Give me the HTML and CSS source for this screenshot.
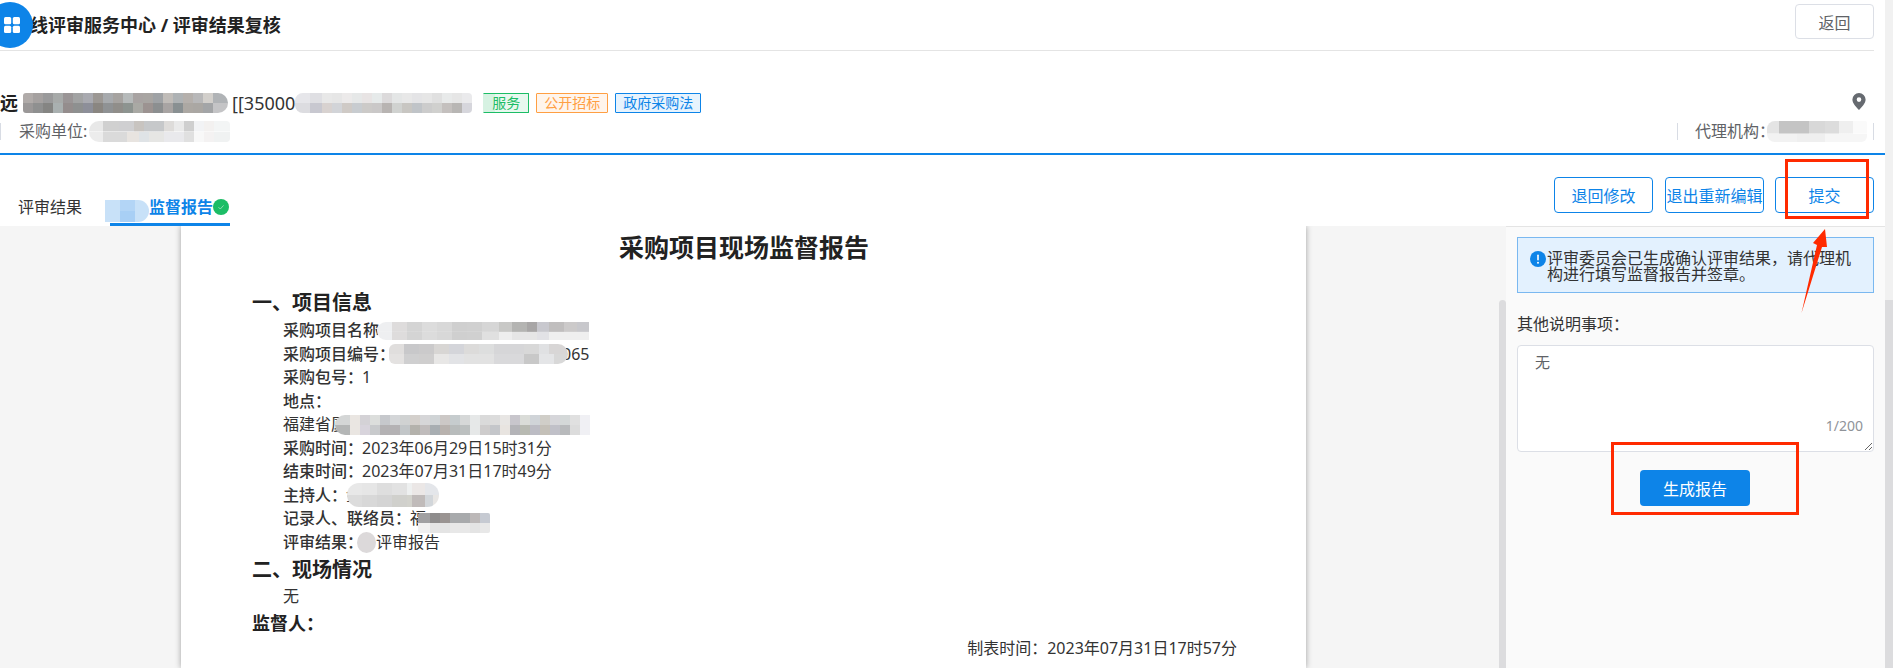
FILE: index.html
```html
<!DOCTYPE html>
<html lang="zh-CN">
<head>
<meta charset="utf-8">
<title>评审结果复核</title>
<link rel="stylesheet" href="styles.css">
</head>
<body>
<div class="page">
  <div class="main">
    <header class="head">
      <h1 class="head-title">在线评审服务中心 / 评审结果复核</h1>
      <button class="btn-back">返回</button>
    </header>
    <section class="proj">
      <div class="proj-row">
        <strong class="proj-name">远</strong>
        <span class="mosaic m-name"></span>
        <span class="proj-code">[[35000</span>
        <span class="mosaic m-code"></span>
        <span class="tag tag-green">服务</span>
        <span class="tag tag-orange">公开招标</span>
        <span class="tag tag-blue">政府采购法</span>
        <svg class="pin" viewBox="0 0 14 17" width="14" height="17"><path fill-rule="evenodd" fill="#666a70" d="M7 0a6.6 6.6 0 0 1 6.6 6.6C13.600 10.500 9.500 14.500 7 17 4.500 14.500.4 10.500.4 6.600A6.600 6.600 0 0 1 7 0zm0 4.300a2.300 2.300 0 1 0 0 4.600 2.300 2.300 0 0 0 0-4.600z"/></svg>
      </div>
      <div class="meta-row">
        <div class="meta-cell meta-buyer">采购单位:<span class="mosaic m-buyer"></span></div>
        <div class="meta-cell meta-agent">代理机构：<span class="mosaic m-agent"></span></div>
      </div>
    </section>
    <nav class="tabbar">
      <div class="tabs">
        <span class="tab">评审结果</span>
        <span class="tab tab-active"><span class="mosaic m-tab"></span><span>监督报告</span><svg class="tab-dot" viewBox="0 0 16 16" width="16" height="16"><circle cx="8" cy="8" r="8" fill="#1cbd66"/><path d="M5.500 8.200l1.800 1.800 3.300-3.600" fill="none" stroke="#8fdcb3" stroke-width="1"/></svg></span>
      </div>
      <div class="actions">
        <button class="btn-line">退回修改</button>
        <button class="btn-line">退出重新编辑</button>
        <button class="btn-line">提交</button>
      </div>
    </nav>
    <div class="work">
      <div class="doc-area">
        <article class="paper">
          <h2 class="paper-title">采购项目现场监督报告</h2>
          <h3 class="sec sec-first">一、项目信息</h3>
          <div class="line"><b>采购项目名称</b><span class="mosaic m-p1"></span></div>
          <div class="line"><b>采购项目编号：</b><span class="mosaic m-p2"></span><span>065</span></div>
          <div class="line"><b>采购包号：</b>1</div>
          <div class="line"><b>地点：</b></div>
          <div class="line">福建省厦<span class="mosaic m-p3"></span></div>
          <div class="line"><b>采购时间：</b>2023年06月29日15时31分</div>
          <div class="line"><b>结束时间：</b>2023年07月31日17时49分</div>
          <div class="line"><b>主持人：</b>金<span class="mosaic m-p4"></span></div>
          <div class="line"><b>记录人、联络员：</b>福<span class="mosaic m-p5"></span></div>
          <div class="line"><b>评审结果：</b><span class="mosaic m-p6"></span>评审报告</div>
          <h3 class="sec sec-second">二、现场情况</h3>
          <div class="line line-none">无</div>
          <h4 class="signer">监督人：</h4>
          <p class="made">制表时间：2023年07月31日17时57分</p>
        </article>
      </div>
      <div class="inner-scroll"><div class="inner-thumb"></div></div>
      <aside class="side">
        <div class="alert">
          <svg class="alert-ico" viewBox="0 0 16 16" width="16" height="16"><circle cx="8" cy="8" r="8" fill="#0d84e8"/><rect x="7.200" y="3.500" width="1.600" height="6" rx=".8" fill="#fff"/><circle cx="8" cy="11.800" r="1" fill="#fff"/></svg>
          <p class="alert-text">评审委员会已生成确认评审结果，请代理机构进行填写监督报告并签章。</p>
        </div>
        <label class="side-label" for="note">其他说明事项：</label>
        <div class="note-box">
          <textarea id="note" class="note">无</textarea>
          <span class="note-count">1/200</span>
        </div>
        <div class="gen-row"><button class="btn-gen">生成报告</button></div>
      </aside>
    </div>
  </div>
  <div class="rail"><div class="rail-thumb"></div></div>
  <div class="logo"><svg viewBox="0 0 16 16" width="16" height="16"><rect x="0" y="0" width="7.200" height="7.200" rx="1.500" fill="#fff"/><rect x="8.800" y="0" width="7.200" height="7.200" rx="1.500" fill="#fff"/><rect x="0" y="8.800" width="7.200" height="7.200" rx="1.500" fill="#fff"/><rect x="8.800" y="8.800" width="7.200" height="7.200" rx="1.500" fill="#fff"/></svg></div>
  <div class="mark mark-submit"></div>
  <div class="mark mark-gen"></div>
  <svg class="arrow" viewBox="0 0 40 90" width="40" height="90"><polygon fill="#ff2a00" points="25,1 27,19 22,19 1.500,85 17,17 13,15"/></svg>
</div>
</body>
</html>
```
FILE: styles.css
```css
* { box-sizing: border-box; }
html, body { margin: 0; padding: 0; }
body {
  width: 1893px;
  height: 668px;
  overflow: hidden;
  background: #fff;
  color: #333;
  font-family: "Noto Sans", "Noto Sans CJK SC", sans-serif;
  font-size: 16px;
}
button { font-family: inherit; font-size: 16px; cursor: pointer; padding: 0; }
h1, h2, h3, h4, p { margin: 0; }

.page { position: relative; display: flex; width: 1893px; height: 668px; overflow: hidden; }
.main { width: 1885px; height: 668px; display: flex; flex-direction: column; }
.rail { width: 8px; height: 668px; background: #f1f1f1; padding-top: 300px; }
.rail-thumb { height: 368px; background: #dcdcde; }

/* header */
.head {
  height: 51px;
  margin-right: 11px;
  padding-left: 12px;
  border-bottom: 1px solid #e4e4e4;
  display: flex;
  justify-content: space-between;
  align-items: flex-start;
}
.head-title { font-size: 18px; font-weight: 700; line-height: 50px; color: #222; }
.btn-back {
  margin-top: 4px;
  width: 79px;
  height: 35px;
  border: 1px solid #dcdfe6;
  border-radius: 4px;
  background: #fff;
  color: #606266;
}
.logo {
  position: absolute;
  left: -13px;
  top: 2px;
  width: 46px;
  height: 46px;
  border-radius: 50%;
  background: #0d84e8;
  display: flex;
  align-items: center;
  justify-content: center;
}
.logo svg { margin-left: 4px; margin-top: -1px; }

/* project info */
.proj { height: 104px; border-bottom: 2px solid #0d84e8; padding-top: 42px; }
.proj-row { display: flex; align-items: center; height: 20px; padding-right: 19px; }
.proj-name { font-size: 18px; line-height: 20px; font-weight: 700; color: #222; width: 23px; flex: none; }
.proj-code { font-size: 18px; line-height: 20px; margin-left: 4px; color: #333; }
.tag {
  height: 20px;
  line-height: 18px;
  padding: 0 7px;
  margin-left: 7px;
  border: 1px solid;
  font-size: 14px;
  border-radius: 1px;
}
.tag-green {
  margin-left: 11px;
  padding: 0 8px;
  color: #1cbd66;
  border-color: #1cbd66;
  background: linear-gradient(90deg, #d6f2e2 0 11px, #e8f8ef 11px);
  border-left-color: #d6f2e2;
}
.tag-orange { color: #ff9f43; border-color: #ff9f43; background: #fff5ec; }
.tag-blue { color: #0d84e8; border-color: #0d84e8; background: #e7f3fd; }
.pin { margin-left: auto; margin-top: -3px; }

.meta-row { display: flex; justify-content: space-between; margin-top: 10px; margin-right: 11px; color: #606266; font-size: 16px; }
.meta-cell { height: 17px; line-height: 17px; display: flex; align-items: center; border-left: 1px solid #d8dce4; }
.meta-buyer { padding-left: 18px; }
.meta-agent { width: 197px; padding-left: 17px; border-right: 1px solid #d8dce4; }

/* mosaics */
.mosaic { display: block; flex: none; }
.m-name {
  width: 205px; height: 20px; border-radius: 3px 10px 10px 3px;
  background:
    linear-gradient(90deg,#b0aba9 0 10px,#a5a1a0 0 20px,#9a9a9b 0 30px,#a7aaa9 0 40px,#9a9596 0 50px,#a2a3a3 0 60px,#a9aab0 0 70px,#9c9894 0 80px,#a7aaad 0 90px,#a6a3a0 0 100px,#b6baba 0 110px,#a8a3a2 0 120px,#a8a5a2 0 130px,#9fa2a5 0 140px,#c0bcb8 0 150px,#aeb2b4 0 160px,#b5b0ac 0 170px,#b8b8b9 0 180px,#d2cfcb 0 190px,#b0b3b6 0 205px) top/100% 50% no-repeat,
    linear-gradient(90deg,#9b9898 0 10px,#8f9090 0 20px,#858583 0 30px,#a9b0b0 0 40px,#948d8d 0 50px,#8e9090 0 60px,#8d8f99 0 70px,#8a8681 0 80px,#8f9294 0 90px,#908e8a 0 100px,#8d9490 0 110px,#a9a9a4 0 120px,#9c9391 0 130px,#8c8f90 0 140px,#a8a4a3 0 150px,#899092 0 160px,#aca8a3 0 170px,#aaa7a3 0 180px,#a3a5a7 0 190px,#c4c4c6 0 205px) bottom/100% 50% no-repeat;
}
.m-code {
  width: 177px; height: 20px; border-radius: 8px 4px 4px 8px;
  background:
    linear-gradient(90deg,#e6e6ea 0 15px,#dfdfe3 0 27px,#e8e8e8 0 37px,#e6e6e6 0 47px,#eceaea 0 57px,#e6e8e8 0 67px,#e8e4e4 0 77px,#e6eaea 0 87px,#dcdadb 0 97px,#e4e6e6 0 107px,#e8e8e8 0 117px,#e4e4e6 0 127px,#e6e6e6 0 137px,#e0e0e0 0 147px,#e8eaea 0 157px,#e6e6e6 0 167px,#eaeaec 0 177px) top/100% 50% no-repeat,
    linear-gradient(90deg,#dcdce0 0 15px,#c8c8d0 0 27px,#d8d2d0 0 37px,#d2d4d8 0 47px,#cfcac6 0 57px,#c8ccd0 0 67px,#cccac8 0 77px,#cac8c8 0 87px,#b8b4b2 0 97px,#d0d2d0 0 107px,#c8c6c2 0 117px,#c0c4c8 0 127px,#cccccc 0 137px,#d0d0ce 0 147px,#c4c0be 0 157px,#b8b6b4 0 167px,#d6d6dc 0 177px) bottom/100% 50% no-repeat;
}
.m-buyer {
  width: 141px; height: 21px; margin-left: 2px; border-radius: 10px 4px 4px 10px;
  background:
    linear-gradient(90deg,#e8e8e8 0 14px,#d0d0d0 0 30px,#cfcfd1 0 45px,#c8c4c0 0 55px,#c6c8ca 0 75px,#dedcda 0 85px,#eaeaea 0 95px,#cfcfcf 0 105px,#f2f3f5 0 115px,#f3f1f0 0 125px,#f3f5f5 0 141px) top/100% 50% no-repeat,
    linear-gradient(90deg,#ececec 0 14px,#dadada 0 38px,#e8e4e0 0 50px,#dfe3e6 0 60px,#e6e6e4 0 75px,#e9e9ec 0 95px,#e0e0e0 0 105px,#f8f8f8 0 115px,#f4f2f2 0 125px,#f0f2f2 0 141px) bottom/100% 50% no-repeat;
}
.m-agent {
  width: 100px; height: 21px; margin-left: -8px; border-radius: 8px 2px 6px 8px;
  background:
    linear-gradient(90deg,#e4e4e4 0 12px,#c4c4c4 0 42px,#d8d8d8 0 58px,#dcdcdc 0 72px,#efefef 0 86px,#fafafa 0 100px) top/100% 60% no-repeat,
    linear-gradient(90deg,#f2f2f2 0 30px,#efefef 0 58px,#f6f6f6 0 100px) bottom/100% 40% no-repeat;
}
.m-tab {
  width: 44px; height: 22px; margin-left: -5px; margin-top: 9px; border-radius: 0 11px 11px 0;
  background:
    linear-gradient(90deg,#c8e1f8 0 15px,#b3d5f6 0 30px,#c8e1f8 0 44px) top/100% 50% no-repeat,
    linear-gradient(90deg,#c8e1f8 0 15px,#a8cff5 0 30px,#c8e1f8 0 44px) bottom/100% 50% no-repeat;
}
.m-p1 {
  width: 212px; height: 18px; margin-left: -1px; border-radius: 9px 0 0 9px;
  background:
    linear-gradient(90deg,#eeeff1 0 15px,#dedcdc 0 30px,#d4d4d4 0 45px,#dcdcdc 0 60px,#d8d8d8 0 75px,#cfcfcf 0 90px,#d0d0d0 0 105px,#d6d6d6 0 122px,#c8c8c6 0 135px,#b4b4b2 0 150px,#a8a6a6 0 160px,#c8c8ce 0 172px,#c0bebe 0 187px,#cccaca 0 200px,#c8c8cc 0 212px) top/100% 55% no-repeat,
    linear-gradient(90deg,#eeeff1 0 15px,#dedcdc 0 30px,#d4d4d4 0 45px,#dcdcdc 0 60px,#d8d8d8 0 75px,#cfcfcf 0 90px,#d0d0d0 0 105px,#e0e0e0 0 122px,#eeeeee 0 135px,#e6e6e6 0 160px,#e2e2e6 0 172px,#efefef 0 212px) bottom/100% 45% no-repeat;
}
.m-p2 {
  width: 179px; height: 20px; margin-left: -5px; margin-right: -6px; position: relative; z-index: 1; border-radius: 6px 10px 10px 6px;
  background:
    linear-gradient(90deg,#e0dedd 0 15px,#c8c8ca 0 30px,#cbcacb 0 45px,#d8d6d4 0 60px,#d4d5da 0 75px,#dcdbda 0 90px,#dddede 0 105px,#d6d6d8 0 135px,#d8d8d8 0 150px,#e0e1e3 0 160px,#d8d6d6 0 179px) top/100% 50% no-repeat,
    linear-gradient(90deg,#e4e2e1 0 15px,#cfcfd0 0 30px,#cfcece 0 45px,#e8e7e6 0 60px,#e2e3e6 0 75px,#e2e2e2 0 105px,#d9d9db 0 135px,#c8c8c8 0 150px,#e4e5e7 0 165px,#d8d8d8 0 179px) bottom/100% 50% no-repeat;
}
.m-p3 {
  width: 255px; height: 20px; margin-left: -12px; border-radius: 10px 0 0 10px;
  background:
    linear-gradient(90deg,#d4d6d6 0 15px,#eae6e2 0 25px,#d4d2d6 0 35px,#dcdedc 0 45px,#c6c8cc 0 55px,#d4d6d8 0 65px,#d0d2d2 0 75px,#d4d0cc 0 85px,#d6d6d8 0 95px,#d0d4d6 0 105px,#ccc8c6 0 115px,#c6ccce 0 125px,#d6d8d8 0 135px,#e6e8e8 0 145px,#dadada 0 155px,#dcdcdc 0 165px,#e8e6e4 0 175px,#c8c6cc 0 185px,#dadcd8 0 195px,#d0d4d8 0 205px,#d0cec8 0 215px,#d6d6da 0 225px,#d4d8d8 0 235px,#e0e0e0 0 245px,#f0f0f4 0 255px) top/100% 50% no-repeat,
    linear-gradient(90deg,#b4b6b6 0 15px,#eae6e2 0 25px,#d8d4dc 0 35px,#c8cacc 0 45px,#b4b2b4 0 65px,#c2c6c8 0 75px,#b4b2ac 0 85px,#c0bcbc 0 95px,#a8aeb2 0 105px,#b8b2ae 0 115px,#b8bcbc 0 125px,#bcc0c0 0 135px,#e6e8e8 0 145px,#cecccc 0 155px,#c4c6ca 0 165px,#e8e4e0 0 175px,#b4b4b8 0 185px,#b8bab2 0 195px,#bcbcc4 0 205px,#c4c0b8 0 215px,#c0c0c8 0 225px,#b8babc 0 235px,#dcdcdc 0 245px,#f0f0f4 0 255px) bottom/100% 50% no-repeat;
}
.m-p4 {
  width: 92px; height: 24px; margin-left: -15px; border-radius: 12px;
  background:
    linear-gradient(90deg,#e8e8e8 0 15px,#e6e6e6 0 30px,#dedede 0 45px,#e2e2e2 0 60px,#eef0f0 0 65px,#ebe7e6 0 78px,#e4e6ea 0 92px) top/100% 50% no-repeat,
    linear-gradient(90deg,#dcdcdc 0 15px,#d8d8d8 0 30px,#d4d4d4 0 45px,#d0d0cc 0 60px,#d2d2cc 0 65px,#c0bbba 0 78px,#d2d6da 0 86px,#e8e6e4 0 92px) bottom/100% 50% no-repeat;
}
.m-p5 {
  width: 72px; height: 20px; margin-left: -8px; margin-top: 8px; border-radius: 2px;
  background:
    linear-gradient(90deg,#a0a0a2 0 12px,#8e8c8c 0 22px,#9a9492 0 32px,#a8aaac 0 52px,#bcb8b8 0 62px,#c6cad2 0 72px) top/100% 50% no-repeat,
    linear-gradient(90deg,#f0f0f0 0 12px,#e4e4e4 0 32px,#e8e8e8 0 52px,#e4e4e4 0 62px,#e8e8e8 0 72px) bottom/100% 50% no-repeat;
}
.m-p6 { width: 19px; height: 21px; border-radius: 50%; background: #dcd9da; margin-left: -5px; }

/* tabs + actions */
.tabbar { position: relative; z-index: 1; height: 71px; display: flex; justify-content: space-between; padding-right: 11px; flex: none; background: #fff; }
.tabs { display: flex; align-items: flex-end; padding-left: 18px; }
.tab { display: flex; align-items: flex-start; height: 35px; line-height: 32px; border-bottom: 3px solid transparent; color: #333; }
.tab-active { margin-left: 28px; width: 120px; border-bottom-color: #0d84e8; color: #0d84e8; font-weight: 700; }
.tab-dot { margin-top: 8px; flex: none; }
.actions { display: flex; gap: 11px; padding-top: 22px; }
.btn-line {
  width: 99px;
  height: 36px;
  border: 1px solid #0d84e8;
  border-radius: 4px;
  background: #fff;
  color: #0d84e8;
  white-space: nowrap;
}
.btn-line:first-child { margin-right: 1px; }

/* work area */
.work { flex: 1; display: flex; background: #f5f5f5; min-height: 0; }
.doc-area { width: 1499px; padding-left: 181px; }
.paper {
  width: 1125px;
  height: 442px;
  background: #fff;
  box-shadow: 0 0 6px rgba(0, 0, 0, .35);
  padding: 0 69px 0 71px;
  color: #333;
}
.paper-title { height: 42px; line-height: 42px; text-align: center; font-size: 25px; font-weight: 700; color: #222; margin-left: -1px; }
.sec { font-size: 20px; font-weight: 700; line-height: 26px; color: #222; }
.sec-first { margin-top: 22px; margin-bottom: 3px; }
.sec-second { margin-top: 3px; margin-bottom: 2px; }
.line { display: flex; align-items: center; height: 23.5px; padding-left: 31px; line-height: 23.5px; white-space: nowrap; }
.line b { font-weight: 500; margin-right: -1px; }
.line-none { height: 23.5px; }
.signer { font-size: 18px; font-weight: 700; line-height: 26px; color: #222; margin-top: 1px; }
.made { text-align: right; line-height: 24px; }

.inner-scroll { width: 7px; padding-top: 74px; background: #f5f5f5; }
.inner-thumb { height: 368px; background: #dcdcde; border-radius: 4px 4px 0 0; }

.side { width: 379px; background: #fafafa; border-top: 1px solid #e4e4e4; padding: 10px 11px 0; }
.alert {
  height: 56px;
  display: flex;
  align-items: flex-start;
  gap: 1px;
  padding: 12px 10px 0 12px;
  background: #e3f1fe;
  border: 1px solid #7ab8f0;
}
.alert-ico { flex: none; margin-top: 1px; }
.alert-text { line-height: 16px; color: #333; }
.side-label { display: block; margin-top: 21px; line-height: 20px; color: #333; }
.note-box { position: relative; margin-top: 11px; height: 107px; }
.note {
  display: block;
  width: 100%;
  height: 107px;
  padding: 6px 17px;
  border: 1px solid #dcdfe6;
  border-radius: 4px;
  background: #fff;
  color: #606266;
  font-family: inherit;
  font-size: 15px;
  line-height: 20px;
  outline: none;
}
.note-count { position: absolute; right: 11px; bottom: 16px; font-size: 14px; line-height: 20px; color: #909399; }
.gen-row { display: flex; justify-content: center; margin-top: 18px; padding-right: 1px; }
.btn-gen { width: 110px; height: 36px; border: 0; border-radius: 4px; background: #0d84e8; color: #fff; }

/* hand-drawn annotations over the screenshot */
.mark { position: absolute; z-index: 2; border: 3px solid #ff2a00; }
.mark-submit { left: 1785px; top: 159px; width: 84px; height: 60px; }
.mark-gen { left: 1611px; top: 442px; width: 188px; height: 73px; }
.arrow { position: absolute; z-index: 2; left: 1800px; top: 228px; }
```
